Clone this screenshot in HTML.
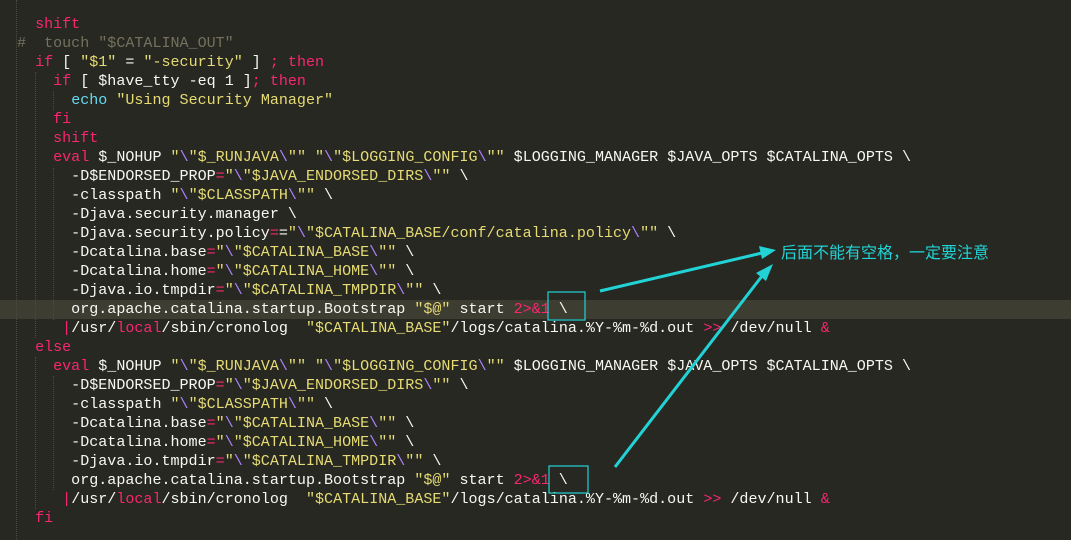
<!DOCTYPE html>
<html><head><meta charset="utf-8"><style>
html,body{margin:0;padding:0;background:#272822;width:1071px;height:540px;overflow:hidden;position:relative}
pre{position:absolute;left:17px;top:15px;margin:0;font-family:"Liberation Mono",monospace;font-size:15.05px;line-height:19px;color:#f8f8f2;z-index:2}
.k{color:#f92672}.s{color:#e6db74}.e{color:#ae81ff}.c{color:#75715e}.f{color:#66d9ef}
.hl{position:absolute;left:0;top:300px;width:1071px;height:19px;background:#3e3d32;z-index:1}
.g{position:absolute;border-left:1px dotted #4a4a40;z-index:1}
svg{position:absolute;left:0;top:0;z-index:3}
.note{position:absolute;left:781px;top:239px;font-family:"Liberation Sans","Noto Sans CJK SC",sans-serif;font-size:16px;color:#22d3d6;z-index:3}
</style></head><body>
<div class="hl"></div>
<div class="g" style="left:16px;top:0;height:540px"></div>
<div class="g" style="left:35px;top:72px;height:266px"></div>
<div class="g" style="left:53px;top:91px;height:19px"></div>
<div class="g" style="left:53px;top:168px;height:152px"></div>
<div class="g" style="left:35px;top:357px;height:152px"></div>
<div class="g" style="left:53px;top:376px;height:114px"></div>
<pre>  <span class="k">shift</span>
<span class="c">#  touch "$CATALINA_OUT"</span>
  <span class="k">if</span> [ <span class="s">"$1"</span> = <span class="s">"-security"</span> ] <span class="k">;</span> <span class="k">then</span>
    <span class="k">if</span> [ $have_tty -eq 1 ]<span class="k">;</span> <span class="k">then</span>
      <span class="f">echo</span> <span class="s">"Using Security Manager"</span>
    <span class="k">fi</span>
    <span class="k">shift</span>
    <span class="k">eval</span> $_NOHUP <span class="s">"<span class="e">\</span>"$_RUNJAVA<span class="e">\</span>""</span> <span class="s">"<span class="e">\</span>"$LOGGING_CONFIG<span class="e">\</span>""</span> $LOGGING_MANAGER $JAVA_OPTS $CATALINA_OPTS \
      -D$ENDORSED_PROP<span class="k">=</span><span class="s">"<span class="e">\</span>"$JAVA_ENDORSED_DIRS<span class="e">\</span>""</span> \
      -classpath <span class="s">"<span class="e">\</span>"$CLASSPATH<span class="e">\</span>""</span> \
      -Djava.security.manager \
      -Djava.security.policy<span class="k">=</span>=<span class="s">"<span class="e">\</span>"$CATALINA_BASE/conf/catalina.policy<span class="e">\</span>""</span> \
      -Dcatalina.base<span class="k">=</span><span class="s">"<span class="e">\</span>"$CATALINA_BASE<span class="e">\</span>""</span> \
      -Dcatalina.home<span class="k">=</span><span class="s">"<span class="e">\</span>"$CATALINA_HOME<span class="e">\</span>""</span> \
      -Djava.io.tmpdir<span class="k">=</span><span class="s">"<span class="e">\</span>"$CATALINA_TMPDIR<span class="e">\</span>""</span> \
      org.apache.catalina.startup.Bootstrap <span class="s">"$@"</span> start <span class="k">2&gt;&amp;1</span> \
     <span class="k">|</span>/usr/<span class="k">local</span>/sbin/cronolog  <span class="s">"$CATALINA_BASE"</span>/logs/catalina.%Y-%m-%d.out <span class="k">&gt;&gt;</span> /dev/null <span class="k">&amp;</span>
  <span class="k">else</span>
    <span class="k">eval</span> $_NOHUP <span class="s">"<span class="e">\</span>"$_RUNJAVA<span class="e">\</span>""</span> <span class="s">"<span class="e">\</span>"$LOGGING_CONFIG<span class="e">\</span>""</span> $LOGGING_MANAGER $JAVA_OPTS $CATALINA_OPTS \
      -D$ENDORSED_PROP<span class="k">=</span><span class="s">"<span class="e">\</span>"$JAVA_ENDORSED_DIRS<span class="e">\</span>""</span> \
      -classpath <span class="s">"<span class="e">\</span>"$CLASSPATH<span class="e">\</span>""</span> \
      -Dcatalina.base<span class="k">=</span><span class="s">"<span class="e">\</span>"$CATALINA_BASE<span class="e">\</span>""</span> \
      -Dcatalina.home<span class="k">=</span><span class="s">"<span class="e">\</span>"$CATALINA_HOME<span class="e">\</span>""</span> \
      -Djava.io.tmpdir<span class="k">=</span><span class="s">"<span class="e">\</span>"$CATALINA_TMPDIR<span class="e">\</span>""</span> \
      org.apache.catalina.startup.Bootstrap <span class="s">"$@"</span> start <span class="k">2&gt;&amp;1</span> \
     <span class="k">|</span>/usr/<span class="k">local</span>/sbin/cronolog  <span class="s">"$CATALINA_BASE"</span>/logs/catalina.%Y-%m-%d.out <span class="k">&gt;&gt;</span> /dev/null <span class="k">&amp;</span>
  <span class="k">fi</span></pre>
<svg width="1071" height="540">
<rect x="548" y="292" width="37" height="28" fill="none" stroke="#22d3d6" stroke-width="1.2"/>
<rect x="549" y="466" width="39" height="27" fill="none" stroke="#22d3d6" stroke-width="1.2"/>
<line x1="600" y1="291" x2="762" y2="253" stroke="#22d3d6" stroke-width="3"/>
<polygon points="776,250 759,246 762,259" fill="#22d3d6"/>
<line x1="615" y1="467" x2="762" y2="276" stroke="#22d3d6" stroke-width="3"/>
<polygon points="773,264 756,273 766,281" fill="#22d3d6"/>
</svg>
<div class="note">后面不能有空格，一定要注意</div>
</body></html>
